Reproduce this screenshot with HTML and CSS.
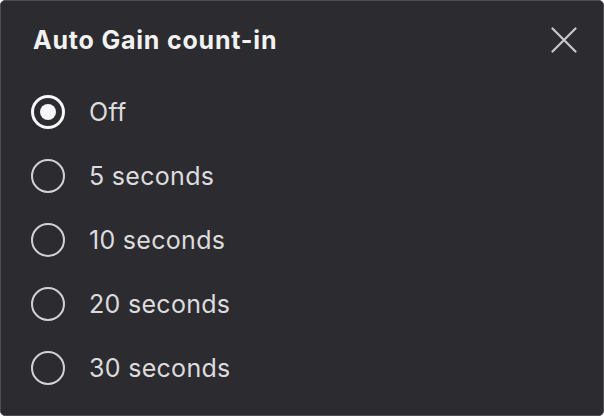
FILE: index.html
```html
<!DOCTYPE html>
<html lang="en">
<head>
    <meta charset="UTF-8">
    <title>Auto Gain count-in</title>
    <link rel="stylesheet" href="styles.css">
</head>
<body>
    <div class="dialog">
        <div class="dialog-header">
            <span class="dialog-title">Auto Gain count-in</span>
            <a class="close-button">
                <svg width="26" height="26" viewBox="0 0 26 26">
                    <path d="M1.5 1.5 L24.5 24.5 M24.5 1.5 L1.5 24.5" stroke="#c9c9cb" stroke-width="2.2" stroke-linecap="round" fill="none"/>
                </svg>
            </a>
        </div>
        <ul class="option-list">
            <li class="option selected"><span class="radio"></span><span class="label">Off</span></li>
            <li class="option"><span class="radio"></span><span class="label">5 seconds</span></li>
            <li class="option"><span class="radio"></span><span class="label">10 seconds</span></li>
            <li class="option"><span class="radio"></span><span class="label">20 seconds</span></li>
            <li class="option"><span class="radio"></span><span class="label">30 seconds</span></li>
        </ul>
    </div>
</body>
</html>
```

FILE: styles.css
```css
html, body {
    margin: 0;
    padding: 0;
    background: #fff;
}
.dialog {
    width: 604px;
    height: 416px;
    box-sizing: border-box;
    background: #2c2b30;
    border: 1px solid #4d4c51;
    border-radius: 5px;
    font-family: Inter, "Noto Sans", sans-serif;
    overflow: hidden;
}
.dialog-header {
    display: flex;
    align-items: center;
    justify-content: space-between;
    padding: 24px 26px 0 32px;
    height: 30px;
}
.dialog-title {
    color: #f2f2f3;
    font-size: 25px;
    font-weight: 700;
    letter-spacing: 0.8px;
}
.close-button {
    display: flex;
    cursor: pointer;
}
.option-list {
    margin: 0;
    padding: 25px 0 0 30px;
    list-style: none;
}
.option {
    display: flex;
    align-items: center;
    height: 64px;
}
.radio {
    width: 34px;
    height: 34px;
    box-sizing: border-box;
    border: 2px solid #d2d2d4;
    border-radius: 50%;
    display: flex;
    align-items: center;
    justify-content: center;
}
.selected .radio {
    border: 3px solid #f7f7f9;
}
.selected .radio::after {
    content: "";
    width: 16px;
    height: 16px;
    border-radius: 50%;
    background: #f7f7f9;
}
.label {
    margin-left: 24px;
    color: #dcdcde;
    font-size: 25px;
    letter-spacing: 0.3px;
}
```
